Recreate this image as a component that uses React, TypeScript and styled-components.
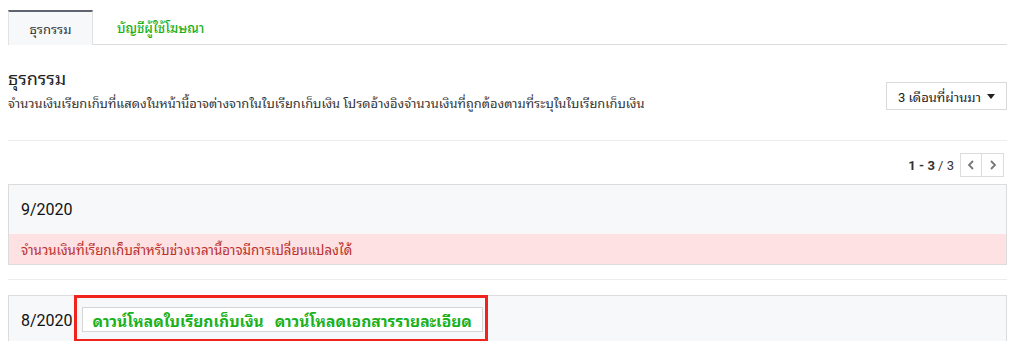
import React from "react";
import styled, { createGlobalStyle } from "styled-components";

const Global = createGlobalStyle`
  html, body { margin: 0; padding: 0; background: #fff; }
  body { font-family: Roboto, "Noto Sans Thai Looped", Loma, Garuda, "Noto Sans", "Noto Sans Thai", "DejaVu Sans", sans-serif; color: #222; }
  * { box-sizing: border-box; }
`;

const Page = styled.div`
  padding: 10px 11px 0 8px;
  width: 1018px;
`;

const Tabs = styled.div`
  display: flex;
  border-bottom: 1px solid #dcdcdc;
  height: 35px;
`;

const Tab = styled.div<{ $active?: boolean }>`
  height: 35px;
  display: flex;
  align-items: center;
  justify-content: center;
  font-size: 13px;
  padding: 0 24px;
  margin-bottom: -1px;
  ${(p) =>
    p.$active
      ? `
    width: 85px;
    padding: 0;
    background: #f7f8f9;
    border-top: 2px solid #5f6470;
    border-left: 1px solid #e2e2e2;
    border-right: 1px solid #e2e2e2;
    color: #333;
  `
      : `
    color: #1ab11c;
    font-weight: 500;
  `}
`;

const HeaderRow = styled.div`
  display: flex;
  align-items: center;
  justify-content: space-between;
  padding-top: 22px;
  padding-bottom: 27px;
  border-bottom: 1px solid #ececec;
`;

const TitleBlock = styled.div`
  display: flex;
  flex-direction: column;
`;

const Title = styled.h1`
  margin: 0;
  font-size: 18px;
  font-weight: 400;
  color: #222;
  line-height: 24px;
`;

const Desc = styled.p`
  margin: 4px 0 0;
  font-size: 12.9px;
  color: #333;
  line-height: 18px;
`;

const Dropdown = styled.button`
  height: 28px;
  width: 121px;
  border: 1px solid #dadada;
  background: #fff;
  font-family: inherit;
  font-size: 13px;
  color: #222;
  display: flex;
  align-items: center;
  justify-content: center;
  gap: 6px;
  padding: 0 10px;
  margin-top: 12px;
`;

const Caret = styled.span`
  width: 0;
  height: 0;
  border-left: 4px solid transparent;
  border-right: 4px solid transparent;
  border-top: 5px solid #222;
`;

const PagerRow = styled.div`
  display: flex;
  justify-content: flex-end;
  align-items: center;
  gap: 6px;
  padding: 12px 3px 7px 0;
`;

const PagerText = styled.span`
  font-size: 13px;
  color: #333;
  b { font-weight: 700; }
`;

const PagerGroup = styled.div`
  display: flex;
  border: 1px solid #dcdcdc;
  height: 24px;
`;

const PagerBtn = styled.div<{ $first?: boolean }>`
  width: 21px;
  display: flex;
  align-items: center;
  justify-content: center;
  ${(p) => (p.$first ? "border-right: 1px solid #dcdcdc;" : "")}
`;

const Card = styled.div`
  border: 1px solid #dcdcdc;
  background: #f7f8fa;
`;

const CardHead = styled.div`
  height: 49px;
  display: flex;
  align-items: center;
  padding: 0 12px;
  gap: 1px;
`;

const Month = styled.span`
  font-size: 16px;
  color: #111;
`;

const Alert = styled.div`
  height: 30px;
  background: #fde1e3;
  color: #b9302c;
  font-size: 13.3px;
  display: flex;
  align-items: center;
  padding: 0 12px;
`;

const Sep = styled.div`
  height: 1px;
  background: #ececec;
  margin: 14px 0 15px;
`;

const Highlight = styled.div`
  border: 3px solid #f0241c;
  padding: 9px 2px 5px 5px;
  margin-top: -1px;
  align-self: stretch;
  height: 47px;
  display: flex;
  align-items: flex-start;
`;

const LinkBox = styled.div`
  border: 1px solid #d6d6d6;
  background: #fff;
  height: 25px;
  display: flex;
  align-items: center;
  gap: 11px;
  padding: 0 10px;
`;

const DlLink = styled.a`
  color: #1ab11c;
  font-size: 15.6px;
  font-weight: 700;
  text-decoration: none;
`;

const Chevron = ({ dir }: { dir: "l" | "r" }) => (
  <svg width="8" height="10" viewBox="0 0 8 10">
    <path
      d={dir === "l" ? "M6 1 L2 5 L6 9" : "M2 1 L6 5 L2 9"}
      fill="none"
      stroke="#777"
      strokeWidth="1.8"
    />
  </svg>
);

export default function App() {
  return (
    <>
      <Global />
      <Page>
        <Tabs>
          <Tab $active>ธุรกรรม</Tab>
          <Tab>บัญชีผู้ใช้โฆษณา</Tab>
        </Tabs>
        <HeaderRow>
          <TitleBlock>
            <Title>ธุรกรรม</Title>
            <Desc>
              จำนวนเงินเรียกเก็บที่แสดงในหน้านี้อาจต่างจากในใบเรียกเก็บเงิน โปรดอ้างอิงจำนวนเงินที่ถูกต้องตามที่ระบุในใบเรียกเก็บเงิน
            </Desc>
          </TitleBlock>
          <Dropdown>
            3 เดือนที่ผ่านมา <Caret />
          </Dropdown>
        </HeaderRow>
        <PagerRow>
          <PagerText>
            <b>1 - 3</b> / 3
          </PagerText>
          <PagerGroup>
            <PagerBtn $first>
              <Chevron dir="l" />
            </PagerBtn>
            <PagerBtn>
              <Chevron dir="r" />
            </PagerBtn>
          </PagerGroup>
        </PagerRow>
        <Card>
          <CardHead>
            <Month>9/2020</Month>
          </CardHead>
          <Alert>จำนวนเงินที่เรียกเก็บสำหรับช่วงเวลานี้อาจมีการเปลี่ยนแปลงได้</Alert>
        </Card>
        <Sep />
        <Card>
          <CardHead>
            <Month>8/2020</Month>
            <Highlight>
              <LinkBox>
                <DlLink href="#">ดาวน์โหลดใบเรียกเก็บเงิน</DlLink>
                <DlLink href="#">ดาวน์โหลดเอกสารรายละเอียด</DlLink>
              </LinkBox>
            </Highlight>
          </CardHead>
        </Card>
      </Page>
    </>
  );
}
